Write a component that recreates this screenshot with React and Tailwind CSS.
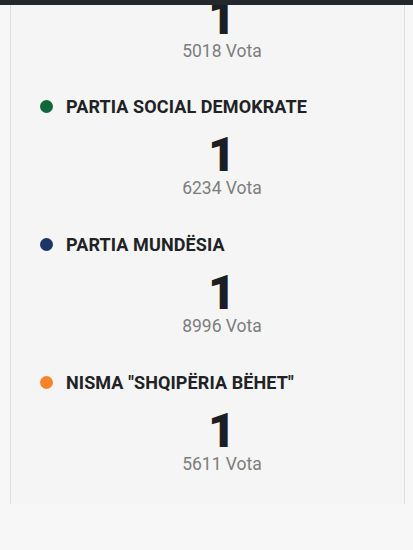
import React from 'react';

const parties = [
  { name: 'PARTIA SOCIAL DEMOKRATE', color: 'bg-[#10683a]', seats: 1, votes: 6234 },
  { name: 'PARTIA MUNDËSIA', color: 'bg-[#1d3466]', seats: 1, votes: 8996 },
  { name: 'NISMA "SHQIPËRIA BËHET"', color: 'bg-[#f5842c]', seats: 1, votes: 5611 },
];

const font = { fontFamily: '"Roboto", "Liberation Sans", sans-serif' };

function Result({ seats, votes, first }) {
  return (
    <div className={`flex flex-col items-center ${first ? '-mt-[10px]' : 'mt-[14px]'}`}>
      <div className="h-[46px] text-[48px] leading-[46px] font-black text-[#1b1e22]">{seats}</div>
      <div className="h-[20px] text-[17.5px] leading-[20px] text-[#7d7d7d]">{votes} Vota</div>
    </div>
  );
}

export default function App() {
  return (
    <div className="min-h-[550px] bg-[#f7f7f7] flex flex-col" style={font}>
      {/* top bar */}
      <div className="h-[5px] bg-[#24282d]" />

      <div className="ml-[10px] w-[395px] border-x border-[#dedede] bg-[#f5f5f5] pl-[29px] pb-[30px] overflow-hidden">
        <Result seats={1} votes={5018} first />

        {parties.map((p, i) => (
          <div key={p.name} className={i === 0 ? 'mt-[33px]' : 'mt-[34px]'}>
            <div className="flex items-center h-[24px] gap-[13px]">
              <span className={`w-[13px] h-[13px] rounded-full ${p.color}`} />
              <span className="text-[18px] font-bold text-[#202226] tracking-[0.1px]">{p.name}</span>
            </div>
            <Result seats={p.seats} votes={p.votes} />
          </div>
        ))}
      </div>
    </div>
  );
}
